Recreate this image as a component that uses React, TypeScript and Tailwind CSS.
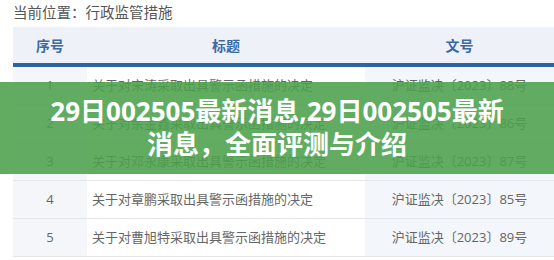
import React from "react";

interface Row {
  no: number;
  title: string;
  docNo: string;
}

const rows: Row[] = [
  { no: 1, title: "关于对宋涛采取出具警示函措施的决定", docNo: "沪证监决〔2023〕88号" },
  { no: 2, title: "关于对余金鑫采取出具警示函措施的决定", docNo: "沪证监决〔2023〕86号" },
  { no: 3, title: "关于对邓永康采取出具警示函措施的决定", docNo: "沪证监决〔2023〕87号" },
  { no: 4, title: "关于对章鹏采取出具警示函措施的决定", docNo: "沪证监决〔2023〕85号" },
  { no: 5, title: "关于对曹旭特采取出具警示函措施的决定", docNo: "沪证监决〔2023〕89号" },
];

const App: React.FC = () => {
  return (
    <div
      className="relative w-[554px] h-[260px] overflow-hidden bg-white"
      style={{ fontFamily: '"Open Sans", "Noto Sans CJK SC", sans-serif' }}
    >
      {/* Breadcrumb */}
      <div className="h-[27px] pl-[13px] flex items-center text-[14.5px] text-[#555] leading-none">
        当前位置：行政监管措施
      </div>

      {/* Table */}
      <div className="ml-[13px]">
        <div className="grid grid-cols-[74px_278px_1fr] h-[40px] bg-[#eef2f8] border-b-4 border-[#2b65a6] text-[14px] font-bold text-[#3a6aa3]">
          <div className="flex items-center justify-center">序号</div>
          <div className="flex items-center justify-center">标题</div>
          <div className="flex items-center justify-center">文号</div>
        </div>
        {rows.map((row) => (
          <div
            key={row.no}
            className="grid grid-cols-[74px_278px_1fr] h-[38px] border-b border-[#e3e5e8] text-[13px] text-[#666]"
          >
            <div className="flex items-center justify-center bg-[#f4f6f9]">{row.no}</div>
            <div className="flex items-center pl-[5px] bg-white">{row.title}</div>
            <div className="flex items-center justify-center bg-[#f3f6fa]">{row.docNo}</div>
          </div>
        ))}
      </div>

      {/* Green headline overlay */}
      <div className="absolute left-0 right-0 top-[82px] h-[92px] bg-[rgba(76,160,76,0.88)] flex items-center justify-center">
        <p
          className="text-center text-white font-bold text-[26px] leading-[33px]"
          style={{ fontFamily: '"Noto Sans", "Noto Sans CJK SC", sans-serif' }}
        >
          29日002505最新消息,29日002505最新
          <br />
          消息，全面评测与介绍
        </p>
      </div>
    </div>
  );
};

export default App;
